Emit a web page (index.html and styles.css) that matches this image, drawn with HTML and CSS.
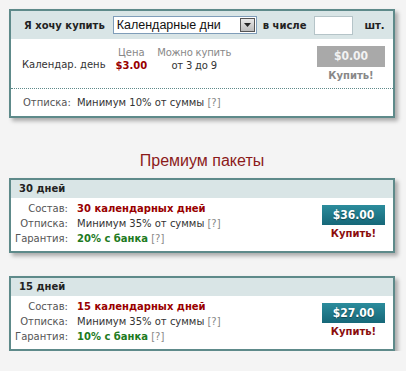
FILE: index.html
```html
<!DOCTYPE html>
<html lang="ru">
<head>
    <meta charset="UTF-8">
    <title>Покупка</title>
    <link rel="stylesheet" href="styles.css">
</head>
<body>
<div class="page">

    <!-- Buy form -->
    <div class="box buy">
        <div class="buy-head">
            <span class="bold">Я хочу купить</span>
            <div class="select">
                <span class="select-text">Календарные дни</span>
                <span class="select-btn">
                    <svg width="9" height="6" viewBox="0 0 9 6"><path d="M1 1h7L4.5 5z" fill="#222"/></svg>
                </span>
            </div>
            <span class="bold">в числе</span>
            <div class="qty"></div>
            <span class="bold">шт.</span>
        </div>
        <div class="buy-body">
            <div class="item-name">Календар. день</div>
            <div class="col col-price">
                <div class="cap">Цена</div>
                <div class="red">$3.00</div>
            </div>
            <div class="col col-range">
                <div class="cap">Можно купить</div>
                <div>от 3 до 9</div>
            </div>
            <div class="buy-btn">
                <div class="btn btn-gray">$0.00</div>
                <div class="buy-link link-gray">Купить!</div>
            </div>
        </div>
        <div class="buy-foot">
            <span class="label">Отписка:</span> Минимум 10% от суммы <span class="help">[?]</span>
        </div>
    </div>

    <h2 class="title">Премиум пакеты</h2>

    <!-- Packs -->
    <div class="box pack">
        <div class="pack-head">30 дней</div>
        <div class="pack-body">
            <div class="rows">
                <span class="label">Состав:</span><span class="red">30 календарных дней</span>
                <span class="label">Отписка:</span><span>Минимум 35% от суммы <span class="help">[?]</span></span>
                <span class="label">Гарантия:</span><span><span class="green">20% с банка</span> <span class="help">[?]</span></span>
            </div>
            <div class="buy-btn">
                <div class="btn btn-teal">$36.00</div>
                <div class="buy-link">Купить!</div>
            </div>
        </div>
    </div>

    <div class="box pack">
        <div class="pack-head">15 дней</div>
        <div class="pack-body">
            <div class="rows">
                <span class="label">Состав:</span><span class="red">15 календарных дней</span>
                <span class="label">Отписка:</span><span>Минимум 35% от суммы <span class="help">[?]</span></span>
                <span class="label">Гарантия:</span><span><span class="green">10% с банка</span> <span class="help">[?]</span></span>
            </div>
            <div class="buy-btn">
                <div class="btn btn-teal">$27.00</div>
                <div class="buy-link">Купить!</div>
            </div>
        </div>
    </div>

</div>
</body>
</html>
```

FILE: styles.css
```css
* {
    margin: 0;
    padding: 0;
    box-sizing: border-box;
}

body {
    background: #f4f4f4;
    font-family: "DejaVu Sans", Verdana, sans-serif;
    font-size: 10px;
    color: #333;
}

.page {
    padding: 9px 11px 0 9px;
}

/* Boxes */
.box {
    background: #fff;
    border: 2px solid #5e8a8a;
    box-shadow: 3px 3px 4px rgba(0, 0, 0, 0.3);
}

.bold {
    font-weight: bold;
    color: #222;
}

.red {
    color: #990000;
    font-weight: bold;
}

.green {
    color: #1d7a1d;
    font-weight: bold;
}

.help {
    color: #888;
}

.label {
    color: #555;
}

/* Buy form */
.buy-head {
    display: flex;
    align-items: center;
    height: 28px;
    background: #d9e5e6;
    padding-left: 13px;
}

.select {
    display: flex;
    align-items: center;
    width: 144px;
    height: 18px;
    margin-left: 8px;
    background: #fff;
    border: 1px solid #7f9db9;
}

.select-text {
    flex: 1;
    padding-left: 3px;
    font-family: "Liberation Sans", Arial, sans-serif;
    font-size: 12.5px;
    color: #111;
}

.select-btn {
    display: flex;
    align-items: center;
    justify-content: center;
    width: 15px;
    height: 14px;
    margin-right: 1px;
    background: linear-gradient(#e8e8e8, #bcbcbc);
    border: 1px solid #555;
}

.select + .bold {
    margin-left: 6px;
}

.qty {
    width: 39px;
    height: 19px;
    margin-left: 8px;
    background: #fff;
    border: 1px solid #b5c4c8;
}

.qty + .bold {
    margin-left: 11px;
}

.buy-body {
    display: flex;
    align-items: flex-start;
    height: 50px;
    padding: 7px 8px 0 11px;
    border-bottom: 1px dotted #5e8a8a;
}

.item-name {
    margin-top: 13px;
}

.col {
    text-align: center;
    line-height: 13px;
}

.col-price {
    margin-left: 10px;
}

.col-range {
    margin-left: 10px;
    letter-spacing: -0.2px;
}

.cap {
    color: #888;
}

.buy-body .buy-btn {
    margin-left: auto;
}

.buy-btn {
    display: flex;
    flex-direction: column;
    align-items: center;
}

.btn {
    width: 63px;
    height: 20px;
    line-height: 20px;
    text-align: center;
    color: #fff;
    font-family: "DejaVu Sans Condensed", "DejaVu Sans", sans-serif;
    font-weight: bold;
    font-size: 12px;
}

.btn-gray {
    width: 68px;
    height: 21px;
    line-height: 21px;
    background: #a9a9a9;
    color: #f2f2f2;
}

.btn-teal {
    background: linear-gradient(#2b8c9c, #166778);
    text-shadow: 0 1px 1px rgba(0, 0, 0, 0.4);
}

.buy-link {
    margin-top: 3px;
    color: #8b0d0d;
    font-weight: bold;
}

.link-gray {
    color: #888;
}

.buy-foot {
    height: 27px;
    line-height: 27px;
    padding-left: 12px;
}

.buy-foot .label {
    margin-right: 3px;
}

/* Title */
.title {
    margin: 32px 0 6px;
    line-height: 22px;
    text-align: center;
    font-family: "Liberation Sans", Arial, sans-serif;
    font-weight: normal;
    font-size: 16px;
    color: #8b1a1a;
}

/* Packs */
.pack + .pack {
    margin-top: 23px;
}

.pack-head {
    height: 18px;
    line-height: 18px;
    padding-left: 8px;
    background: #d9e5e6;
    font-weight: bold;
    color: #222;
}

.pack-body {
    display: flex;
    align-items: flex-start;
    padding: 3px 8px 5px 0;
}

.rows {
    display: grid;
    grid-template-columns: 57px auto;
    column-gap: 9px;
    line-height: 15px;
}

.rows .label {
    text-align: right;
}

.pack-body .buy-btn {
    margin-left: auto;
    margin-top: 4px;
}
```
